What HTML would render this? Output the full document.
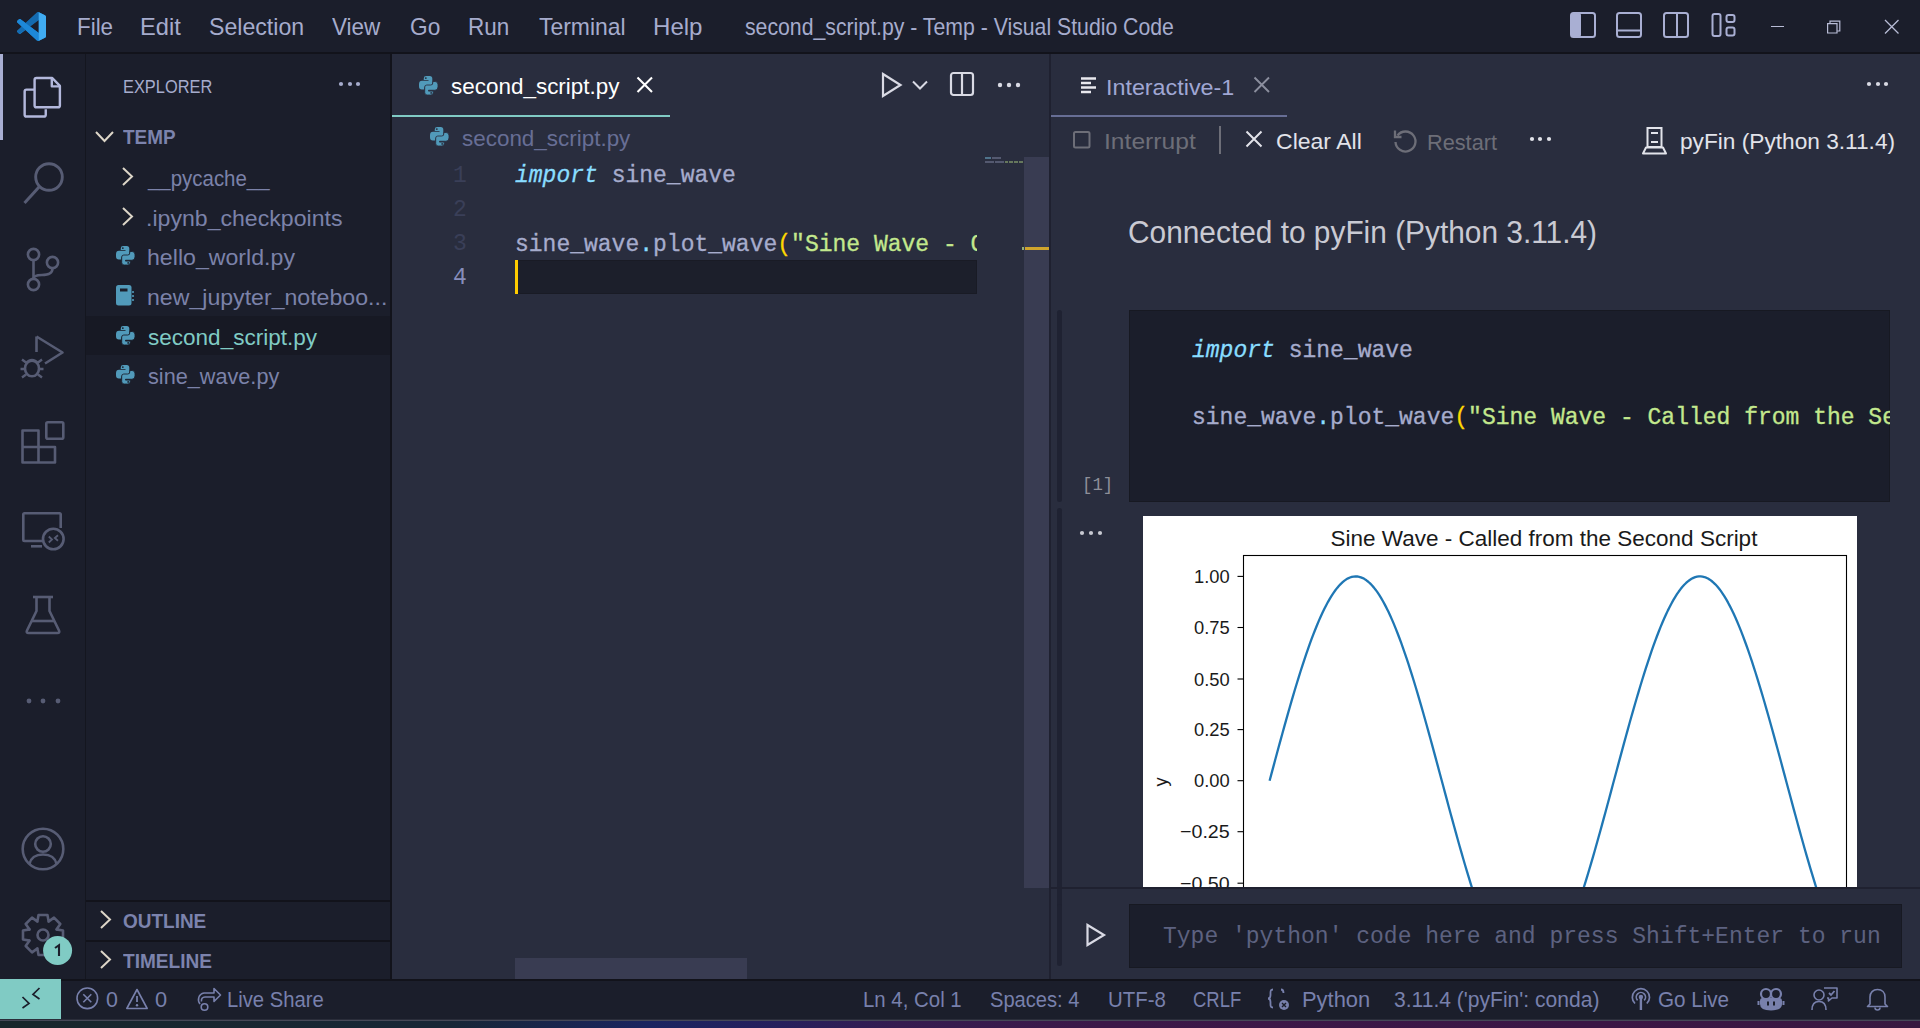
<!DOCTYPE html>
<html><head><meta charset="utf-8"><title>VS Code</title>
<style>
html,body{margin:0;padding:0;width:1920px;height:1028px;overflow:hidden;background:#1b1e2b;}
body{position:relative;font-family:'Liberation Sans', sans-serif;}
</style></head><body>
<div style="position:absolute;left:0px;top:0px;width:1920px;height:52px;background:#1b1e2b;"></div><div style="position:absolute;left:0px;top:52px;width:1920px;height:2px;background:#12131b;"></div><div style="position:absolute;left:0px;top:54px;width:85px;height:925px;background:#1b1e2b;"></div><div style="position:absolute;left:85px;top:54px;width:1px;height:925px;background:#14161f;"></div><div style="position:absolute;left:86px;top:54px;width:304px;height:925px;background:#1b1e2b;"></div><div style="position:absolute;left:390px;top:54px;width:2px;height:925px;background:#12131b;"></div><div style="position:absolute;left:392px;top:54px;width:657px;height:925px;background:#292d3e;"></div><div style="position:absolute;left:1049px;top:54px;width:2px;height:925px;background:#1f2130;"></div><div style="position:absolute;left:1051px;top:54px;width:869px;height:925px;background:#292d3e;"></div><div style="position:absolute;left:0px;top:979px;width:1920px;height:2px;background:#12131b;"></div><div style="position:absolute;left:0px;top:981px;width:1920px;height:38px;background:#1b1e2b;"></div><div style="position:absolute;left:0px;top:1019px;width:1920px;height:1px;background:#2a2d3a;"></div><div style="position:absolute;left:0px;top:1020px;width:1920px;height:1px;background:#454857;"></div><div style="position:absolute;left:0px;top:1021px;width:1920px;height:7px;background:linear-gradient(90deg,#18262b 0px,#172636 450px,#1a2460 650px,#261f5c 780px,#351c50 900px,#3c1848 1100px,#3b1645 1600px,#381840 1920px);"></div><svg style="position:absolute;left:17px;top:12px;" width="29" height="29" viewBox="0 0 100 100" fill="none"><path fill="#1d88d8" fill-rule="evenodd" d="M70.9 99.3C72.5 99.9 74.3 99.9 75.9 99.1L96.5 89.2C98.6 88.2 100 86 100 83.6V16.4C100 14 98.6 11.8 96.5 10.8L75.9 0.9C73.8 -0.1 71.3 0.1 69.5 1.4C69.3 1.6 69 1.8 68.8 2.1L29.4 38L12.2 25C10.6 23.8 8.4 23.9 6.9 25.2L1.4 30.3C-0.5 31.9 -0.5 34.8 1.4 36.4L16.2 50L1.4 63.6C-0.5 65.2 -0.5 68.1 1.4 69.7L6.9 74.8C8.4 76.1 10.6 76.2 12.2 75L29.4 62L68.8 97.9C69.4 98.5 70.1 99 70.9 99.3ZM75 27.3L45.1 50L75 72.7V27.3Z"/>
<path fill="#0b4a80" fill-opacity="0.45" d="M0 66L8 75.5L45.1 50L75 27.3V0.3L69 1.6L29.4 38L16.2 50Z"/>
<path fill="#1d88d8" d="M12.2 25C10.6 23.8 8.4 23.9 6.9 25.2L1.4 30.3C-0.5 31.9 -0.5 34.8 1.4 36.4L16.2 50L29.4 62L68.8 97.9C69.4 98.5 70.1 99 70.9 99.3L75 72.7L45.1 50L29.4 38Z"/>
<path fill="#47b3f7" fill-opacity="0.85" d="M75 0.5L96.5 10.8C98.6 11.8 100 14 100 16.4V83.6C100 86 98.6 88.2 96.5 89.2L75.9 99.1L75 99.5Z"/></svg><div style="position:absolute;left:76.59px;top:16.01px;font-family:'Liberation Sans', sans-serif;font-size:23.4px;line-height:1;white-space:pre;color:#a6accd;font-weight:400;font-style:normal;transform:scaleX(0.9571);transform-origin:0 0;">File</div><div style="position:absolute;left:139.58px;top:16.01px;font-family:'Liberation Sans', sans-serif;font-size:23.4px;line-height:1;white-space:pre;color:#a6accd;font-weight:400;font-style:normal;transform:scaleX(1.0105);transform-origin:0 0;">Edit</div><div style="position:absolute;left:208.51px;top:16.01px;font-family:'Liberation Sans', sans-serif;font-size:23.4px;line-height:1;white-space:pre;color:#a6accd;font-weight:400;font-style:normal;transform:scaleX(0.9883);transform-origin:0 0;">Selection</div><div style="position:absolute;left:332.00px;top:16.01px;font-family:'Liberation Sans', sans-serif;font-size:23.4px;line-height:1;white-space:pre;color:#a6accd;font-weight:400;font-style:normal;transform:scaleX(0.9608);transform-origin:0 0;">View</div><div style="position:absolute;left:409.53px;top:16.01px;font-family:'Liberation Sans', sans-serif;font-size:23.4px;line-height:1;white-space:pre;color:#a6accd;font-weight:400;font-style:normal;transform:scaleX(0.9700);transform-origin:0 0;">Go</div><div style="position:absolute;left:467.68px;top:16.01px;font-family:'Liberation Sans', sans-serif;font-size:23.4px;line-height:1;white-space:pre;color:#a6accd;font-weight:400;font-style:normal;transform:scaleX(0.9600);transform-origin:0 0;">Run</div><div style="position:absolute;left:538.70px;top:16.01px;font-family:'Liberation Sans', sans-serif;font-size:23.4px;line-height:1;white-space:pre;color:#a6accd;font-weight:400;font-style:normal;transform:scaleX(0.9805);transform-origin:0 0;">Terminal</div><div style="position:absolute;left:652.64px;top:16.01px;font-family:'Liberation Sans', sans-serif;font-size:23.4px;line-height:1;white-space:pre;color:#a6accd;font-weight:400;font-style:normal;transform:scaleX(1.0289);transform-origin:0 0;">Help</div><div style="position:absolute;left:744.69px;top:16.01px;font-family:'Liberation Sans', sans-serif;font-size:23.4px;line-height:1;white-space:pre;color:#a6accd;font-weight:400;font-style:normal;transform:scaleX(0.9079);transform-origin:0 0;">second_script.py - Temp - Visual Studio Code</div><svg style="position:absolute;left:1570px;top:12px;" width="26" height="26" viewBox="0 0 26 26" fill="none"><rect x="1" y="1" width="24" height="24" rx="2.5" stroke="#a9afd3" stroke-width="2"/><rect x="1" y="1" width="10" height="24" rx="2" fill="#a9afd3"/></svg><svg style="position:absolute;left:1616px;top:12px;" width="27" height="26" viewBox="0 0 27 26" fill="none"><rect x="1" y="1" width="24" height="24" rx="2.5" stroke="#a9afd3" stroke-width="2"/><line x1="1" y1="18.5" x2="25" y2="18.5" stroke="#a9afd3" stroke-width="2"/></svg><svg style="position:absolute;left:1663px;top:12px;" width="27" height="26" viewBox="0 0 27 26" fill="none"><rect x="1" y="1" width="24" height="24" rx="2.5" stroke="#a9afd3" stroke-width="2"/><line x1="14" y1="1" x2="14" y2="25" stroke="#a9afd3" stroke-width="2"/></svg><svg style="position:absolute;left:1711px;top:12px;" width="27" height="26" viewBox="0 0 27 26" fill="none"><rect x="1.5" y="2" width="8" height="22" rx="2" stroke="#a9afd3" stroke-width="2"/><rect x="15.5" y="3" width="8" height="7" rx="2" stroke="#a9afd3" stroke-width="2"/><rect x="15.5" y="15.5" width="8" height="8" rx="2" stroke="#a9afd3" stroke-width="2"/></svg><div style="position:absolute;left:1771px;top:26px;width:13px;height:1.2px;background:#b8bcd6;"></div><svg style="position:absolute;left:1826px;top:19px;" width="16" height="16" viewBox="0 0 16 16" fill="none"><path d="M1.6 4.6h9.4v9.4H1.6z" stroke="#b8bcd6" stroke-width="1.2" fill="none"/><path d="M4 4.4V2.2h9.8v9.8h-2.6" stroke="#b8bcd6" stroke-width="1.2" fill="none"/></svg><svg style="position:absolute;left:1884px;top:19px;" width="16" height="16" viewBox="0 0 16 16" fill="none"><path d="M1 1L14.5 14.5M14.5 1L1 14.5" stroke="#b8bcd6" stroke-width="1.3"/></svg><div style="position:absolute;left:0px;top:54px;width:3px;height:86px;background:#a9afd3;"></div><svg style="position:absolute;left:20px;top:72px;" width="46" height="50" viewBox="0 0 46 50" fill="none"><g transform="translate(22.5 25.5) scale(0.93) translate(-22.5 -25.5)"><path d="M14 17 H5.3 Q3.3 17 3.3 19 V44 Q3.3 46 5.3 46 H24 Q26 46 26 44 V38" stroke="#b3b8dc" stroke-width="2.6"/>
<path d="M16 4.5 Q14 4.5 14 6.5 V34 Q14 36 16 36 H39.2 Q41.2 36 41.2 34 V13 L33 4.5 Z" stroke="#b3b8dc" stroke-width="2.6" stroke-linejoin="round"/>
<path d="M32.5 4.8 V13.5 H41" stroke="#b3b8dc" stroke-width="2.6" stroke-linejoin="round"/></g></svg><svg style="position:absolute;left:20px;top:158px;" width="48" height="50" viewBox="0 0 48 50" fill="none"><circle cx="29" cy="19" r="13.3" stroke="#575c74" stroke-width="2.9"/><path d="M19.5 28.5 L4.5 45" stroke="#575c74" stroke-width="3"/></svg><svg style="position:absolute;left:20px;top:244px;" width="46" height="52" viewBox="0 0 46 52" fill="none"><circle cx="13.5" cy="10.5" r="5.6" stroke="#575c74" stroke-width="2.6"/>
<circle cx="13.5" cy="40.5" r="5.6" stroke="#575c74" stroke-width="2.6"/>
<circle cx="32.5" cy="18.5" r="5.6" stroke="#575c74" stroke-width="2.6"/>
<path d="M13.5 16.2 V34.8" stroke="#575c74" stroke-width="2.6"/>
<path d="M32.5 24.2 C32.5 30 28 31 22 31 C17 31 13.5 32 13.5 35" stroke="#575c74" stroke-width="2.6"/></svg><svg style="position:absolute;left:0px;top:320px;" width="86" height="240" viewBox="0 0 86 240" fill="none"><g transform="translate(0,-320)">
<path d="M36.5 336.5 V352 M36.5 336.5 L62.5 352.5 L45 363.5" stroke="#575c74" stroke-width="2.6" stroke-linejoin="round"/>
<path d="M25.5 363.5 Q32 356.5 38.5 363.5" stroke="#575c74" stroke-width="2.4"/>
<ellipse cx="32" cy="368.5" rx="7" ry="7.8" stroke="#575c74" stroke-width="2.6"/>
<path d="M22 359.5 L26 362.5 M42 359.5 L38 362.5 M20.5 369 H25 M39 369 H43.5 M22 377.5 L26 374.5 M42 377.5 L38 374.5" stroke="#575c74" stroke-width="2.3"/>
<path d="M22.5 430.5 H38.5 V447 H55 V462.5 H22.5 Z M22.5 447 H38.5 V462.5" stroke="#575c74" stroke-width="2.6" stroke-linejoin="round"/>
<rect x="46.3" y="422.3" width="17" height="16.5" rx="1.5" stroke="#575c74" stroke-width="2.6"/>
<path d="M43 541 H24.5 Q23.3 541 23.3 539.8 V514.5 Q23.3 513.3 24.5 513.3 H59.5 Q60.7 513.3 60.7 514.5 V528" stroke="#575c74" stroke-width="2.6"/>
<path d="M31 546.3 H42" stroke="#575c74" stroke-width="2.6"/>
<circle cx="53.3" cy="539" r="10.3" stroke="#575c74" stroke-width="2.6"/>
<path d="M48.8 536.5 L52 539.5 L48.8 542.5 M58 535.3 L54.8 538 L58 540.8" stroke="#575c74" stroke-width="1.8"/>
</g></svg><svg style="position:absolute;left:20px;top:592px;" width="46" height="46" viewBox="0 0 46 46" fill="none"><path d="M16.5 6 V19 L7 38.5 Q6 41 8.5 41 H37.5 Q40 41 39 38.5 L29.5 19 V6" stroke="#575c74" stroke-width="2.6" stroke-linejoin="round"/>
<path d="M13 5 H33" stroke="#575c74" stroke-width="2.6"/><path d="M11.5 29 H34.5" stroke="#575c74" stroke-width="2.6"/></svg><svg style="position:absolute;left:25.5px;top:698px;" width="6" height="6" viewBox="0 0 6 6" fill="none"><circle cx="3" cy="3" r="2.4" fill="#575c74"/></svg><svg style="position:absolute;left:40px;top:698px;" width="6" height="6" viewBox="0 0 6 6" fill="none"><circle cx="3" cy="3" r="2.4" fill="#575c74"/></svg><svg style="position:absolute;left:54.5px;top:698px;" width="6" height="6" viewBox="0 0 6 6" fill="none"><circle cx="3" cy="3" r="2.4" fill="#575c74"/></svg><svg style="position:absolute;left:18px;top:825px;" width="50" height="50" viewBox="0 0 50 50" fill="none"><circle cx="25" cy="24" r="20.3" stroke="#575c74" stroke-width="2.6"/>
<circle cx="25" cy="19" r="7.8" stroke="#575c74" stroke-width="2.6"/>
<path d="M11.5 39 C13 32 18 29.5 25 29.5 C32 29.5 37 32 38.5 39" stroke="#575c74" stroke-width="2.6"/></svg><svg style="position:absolute;left:18px;top:910px;" width="50" height="50" viewBox="0 0 50 50" fill="none"><path d="M38.36 19.35 L45.01 20.53 L45.01 29.47 L38.36 30.65 L38.44 30.45 L42.31 35.98 L35.98 42.31 L30.45 38.44 L30.65 38.36 L29.47 45.01 L20.53 45.01 L19.35 38.36 L19.55 38.44 L14.02 42.31 L7.69 35.98 L11.56 30.45 L11.64 30.65 L4.99 29.47 L4.99 20.53 L11.64 19.35 L11.56 19.55 L7.69 14.02 L14.02 7.69 L19.55 11.56 L19.35 11.64 L20.53 4.99 L29.47 4.99 L30.65 11.64 L30.45 11.56 L35.98 7.69 L42.31 14.02 L38.44 19.55Z" stroke="#575c74" stroke-width="2.6" stroke-linejoin="round"/><circle cx="25" cy="25" r="5.5" stroke="#575c74" stroke-width="2.6"/></svg><svg style="position:absolute;left:43px;top:936px;" width="30" height="30" viewBox="0 0 30 30" fill="none"><circle cx="14.6" cy="14.5" r="14.5" fill="#80cbc4"/></svg><svg style="position:absolute;left:50px;top:940px;" width="16" height="20" viewBox="0 0 16 20" fill="none"><path d="M5 8 L9 5.2 V16" stroke="#1b1e2b" stroke-width="2.1" stroke-linejoin="miter"/></svg><div style="position:absolute;left:123.14px;top:76.85px;font-family:'Liberation Sans', sans-serif;font-size:19px;line-height:1;white-space:pre;color:#a6accd;font-weight:400;font-style:normal;transform:scaleX(0.8627);transform-origin:0 0;">EXPLORER</div><svg style="position:absolute;left:338px;top:81px;" width="6" height="6" viewBox="0 0 6 6" fill="none"><circle cx="3" cy="3" r="2.1" fill="#a6accd"/></svg><svg style="position:absolute;left:346.5px;top:81px;" width="6" height="6" viewBox="0 0 6 6" fill="none"><circle cx="3" cy="3" r="2.1" fill="#a6accd"/></svg><svg style="position:absolute;left:355px;top:81px;" width="6" height="6" viewBox="0 0 6 6" fill="none"><circle cx="3" cy="3" r="2.1" fill="#a6accd"/></svg><svg style="position:absolute;left:94px;top:130px;" width="21" height="13" viewBox="0 0 21 13" fill="none"><path d="M2 2 L10.5 11 L19 2" stroke="#ddd6c8" stroke-width="2"/></svg><div style="position:absolute;left:123.00px;top:127.57px;font-family:'Liberation Sans', sans-serif;font-size:19.8px;line-height:1;white-space:pre;color:#7c83ad;font-weight:700;font-style:normal;transform:scaleX(0.9564);transform-origin:0 0;">TEMP</div><svg style="position:absolute;left:121px;top:166px;" width="13" height="21" viewBox="0 0 13 21" fill="none"><path d="M2 2 L11 10.5 L2 19" stroke="#ddd6c8" stroke-width="2" stroke-linejoin="miter"/></svg><div style="position:absolute;left:148.31px;top:167.68px;font-family:'Liberation Sans', sans-serif;font-size:22.5px;line-height:1;white-space:pre;color:#7b82a9;font-weight:400;font-style:normal;transform:scaleX(0.9081);transform-origin:0 0;">__pycache__</div><svg style="position:absolute;left:121px;top:206px;" width="13" height="21" viewBox="0 0 13 21" fill="none"><path d="M2 2 L11 10.5 L2 19" stroke="#ddd6c8" stroke-width="2" stroke-linejoin="miter"/></svg><div style="position:absolute;left:145.75px;top:207.68px;font-family:'Liberation Sans', sans-serif;font-size:22.5px;line-height:1;white-space:pre;color:#7b82a9;font-weight:400;font-style:normal;transform:scaleX(1.0265);transform-origin:0 0;">.ipynb_checkpoints</div><svg style="position:absolute;left:115.5px;top:246px;" width="19" height="19" viewBox="0 0 20 20" fill="none"><path fill="#519aba" d="M7.5 0 H11.3 Q14 0 14 2.7 V8.3 Q14 10.5 11.8 10.5 H7.7 Q5.5 10.5 5.5 12.7 V14.2 H3 Q0 14.2 0 10.8 V8.6 Q0 5 3.2 5 H10 V4.1 H5 V2.5 Q5 0 7.5 0 Z"/>
<path fill="#519aba" stroke="#1b1e2b" stroke-width="0.9" d="M7.5 0 H11.3 Q14 0 14 2.7 V8.3 Q14 10.5 11.8 10.5 H7.7 Q5.5 10.5 5.5 12.7 V14.2 H3 Q0 14.2 0 10.8 V8.6 Q0 5 3.2 5 H10 V4.1 H5 V2.5 Q5 0 7.5 0 Z" transform="rotate(180 10 10)"/>
<circle cx="7.2" cy="2.2" r="0.95" fill="#1b1e2b"/><circle cx="12.8" cy="17.8" r="0.95" fill="#1b1e2b"/></svg><div style="position:absolute;left:147.17px;top:247.18px;font-family:'Liberation Sans', sans-serif;font-size:22.5px;line-height:1;white-space:pre;color:#7b82a9;font-weight:400;font-style:normal;transform:scaleX(1.0287);transform-origin:0 0;">hello_world.py</div><svg style="position:absolute;left:116px;top:285px;" width="19" height="21" viewBox="0 0 19 21" fill="none"><rect x="0" y="0" width="15.5" height="20.5" rx="2.5" fill="#519aba"/>
<rect x="4" y="3.5" width="7.5" height="3" fill="#1b1e2b"/>
<circle cx="17" cy="7" r="1.1" fill="#519aba"/><circle cx="17" cy="11" r="1.1" fill="#519aba"/><circle cx="17" cy="15" r="1.1" fill="#519aba"/></svg><div style="position:absolute;left:147.17px;top:287.18px;font-family:'Liberation Sans', sans-serif;font-size:22.5px;line-height:1;white-space:pre;color:#7b82a9;font-weight:400;font-style:normal;transform:scaleX(1.0273);transform-origin:0 0;">new_jupyter_noteboo...</div><div style="position:absolute;left:86px;top:316px;width:304px;height:39px;background:#171924;"></div><svg style="position:absolute;left:115.5px;top:325.5px;" width="19" height="19" viewBox="0 0 20 20" fill="none"><path fill="#519aba" d="M7.5 0 H11.3 Q14 0 14 2.7 V8.3 Q14 10.5 11.8 10.5 H7.7 Q5.5 10.5 5.5 12.7 V14.2 H3 Q0 14.2 0 10.8 V8.6 Q0 5 3.2 5 H10 V4.1 H5 V2.5 Q5 0 7.5 0 Z"/>
<path fill="#519aba" stroke="#171924" stroke-width="0.9" d="M7.5 0 H11.3 Q14 0 14 2.7 V8.3 Q14 10.5 11.8 10.5 H7.7 Q5.5 10.5 5.5 12.7 V14.2 H3 Q0 14.2 0 10.8 V8.6 Q0 5 3.2 5 H10 V4.1 H5 V2.5 Q5 0 7.5 0 Z" transform="rotate(180 10 10)"/>
<circle cx="7.2" cy="2.2" r="0.95" fill="#171924"/><circle cx="12.8" cy="17.8" r="0.95" fill="#171924"/></svg><div style="position:absolute;left:147.60px;top:326.68px;font-family:'Liberation Sans', sans-serif;font-size:22.5px;line-height:1;white-space:pre;color:#80cbc4;font-weight:400;font-style:normal;transform:scaleX(1.0012);transform-origin:0 0;">second_script.py</div><svg style="position:absolute;left:115.5px;top:365px;" width="19" height="19" viewBox="0 0 20 20" fill="none"><path fill="#519aba" d="M7.5 0 H11.3 Q14 0 14 2.7 V8.3 Q14 10.5 11.8 10.5 H7.7 Q5.5 10.5 5.5 12.7 V14.2 H3 Q0 14.2 0 10.8 V8.6 Q0 5 3.2 5 H10 V4.1 H5 V2.5 Q5 0 7.5 0 Z"/>
<path fill="#519aba" stroke="#1b1e2b" stroke-width="0.9" d="M7.5 0 H11.3 Q14 0 14 2.7 V8.3 Q14 10.5 11.8 10.5 H7.7 Q5.5 10.5 5.5 12.7 V14.2 H3 Q0 14.2 0 10.8 V8.6 Q0 5 3.2 5 H10 V4.1 H5 V2.5 Q5 0 7.5 0 Z" transform="rotate(180 10 10)"/>
<circle cx="7.2" cy="2.2" r="0.95" fill="#1b1e2b"/><circle cx="12.8" cy="17.8" r="0.95" fill="#1b1e2b"/></svg><div style="position:absolute;left:147.60px;top:366.18px;font-family:'Liberation Sans', sans-serif;font-size:22.5px;line-height:1;white-space:pre;color:#7b82a9;font-weight:400;font-style:normal;transform:scaleX(0.9628);transform-origin:0 0;">sine_wave.py</div><div style="position:absolute;left:86px;top:900px;width:304px;height:2px;background:#12131b;"></div><svg style="position:absolute;left:99px;top:909px;" width="13" height="21" viewBox="0 0 13 21" fill="none"><path d="M2 2 L11 10.5 L2 19" stroke="#ddd6c8" stroke-width="2" stroke-linejoin="miter"/></svg><div style="position:absolute;left:123.00px;top:911.57px;font-family:'Liberation Sans', sans-serif;font-size:19.8px;line-height:1;white-space:pre;color:#7c83ad;font-weight:700;font-style:normal;transform:scaleX(0.9593);transform-origin:0 0;">OUTLINE</div><div style="position:absolute;left:86px;top:940px;width:304px;height:2px;background:#12131b;"></div><svg style="position:absolute;left:99px;top:949px;" width="13" height="21" viewBox="0 0 13 21" fill="none"><path d="M2 2 L11 10.5 L2 19" stroke="#ddd6c8" stroke-width="2" stroke-linejoin="miter"/></svg><div style="position:absolute;left:123.00px;top:951.57px;font-family:'Liberation Sans', sans-serif;font-size:19.8px;line-height:1;white-space:pre;color:#7c83ad;font-weight:700;font-style:normal;transform:scaleX(0.9641);transform-origin:0 0;">TIMELINE</div><div style="position:absolute;left:392px;top:115px;width:278px;height:2px;background:#80cbc4;"></div><svg style="position:absolute;left:418.5px;top:76px;" width="19" height="19" viewBox="0 0 20 20" fill="none"><path fill="#519aba" d="M7.5 0 H11.3 Q14 0 14 2.7 V8.3 Q14 10.5 11.8 10.5 H7.7 Q5.5 10.5 5.5 12.7 V14.2 H3 Q0 14.2 0 10.8 V8.6 Q0 5 3.2 5 H10 V4.1 H5 V2.5 Q5 0 7.5 0 Z"/>
<path fill="#519aba" stroke="#292d3e" stroke-width="0.9" d="M7.5 0 H11.3 Q14 0 14 2.7 V8.3 Q14 10.5 11.8 10.5 H7.7 Q5.5 10.5 5.5 12.7 V14.2 H3 Q0 14.2 0 10.8 V8.6 Q0 5 3.2 5 H10 V4.1 H5 V2.5 Q5 0 7.5 0 Z" transform="rotate(180 10 10)"/>
<circle cx="7.2" cy="2.2" r="0.95" fill="#292d3e"/><circle cx="12.8" cy="17.8" r="0.95" fill="#292d3e"/></svg><div style="position:absolute;left:450.60px;top:75.88px;font-family:'Liberation Sans', sans-serif;font-size:22.5px;line-height:1;white-space:pre;color:#ffffff;font-weight:400;font-style:normal;transform:scaleX(0.9982);transform-origin:0 0;">second_script.py</div><svg style="position:absolute;left:635px;top:75px;" width="20" height="20" viewBox="0 0 20 20" fill="none"><path d="M2.5 2.5 L17 17 M17 2.5 L2.5 17" stroke="#ffffff" stroke-width="2.1"/></svg><svg style="position:absolute;left:880px;top:71px;" width="24" height="28" viewBox="0 0 24 28" fill="none"><path d="M3 3 L20.5 14 L3 25 Z" stroke="#d9dae4" stroke-width="2.2" stroke-linejoin="miter"/></svg><svg style="position:absolute;left:911px;top:79px;" width="18" height="12" viewBox="0 0 18 12" fill="none"><path d="M2 2.5 L9 9.5 L16 2.5" stroke="#d9dae4" stroke-width="2"/></svg><svg style="position:absolute;left:948px;top:70px;" width="28" height="28" viewBox="0 0 28 28" fill="none"><rect x="3" y="3" width="22" height="22" rx="2.5" stroke="#d9dae4" stroke-width="2.2"/><path d="M14 3 V25" stroke="#d9dae4" stroke-width="2.2"/></svg><svg style="position:absolute;left:996.5px;top:81.5px;" width="6" height="6" viewBox="0 0 6 6" fill="none"><circle cx="3" cy="3" r="2.2" fill="#d9dae4"/></svg><svg style="position:absolute;left:1005.5px;top:81.5px;" width="6" height="6" viewBox="0 0 6 6" fill="none"><circle cx="3" cy="3" r="2.2" fill="#d9dae4"/></svg><svg style="position:absolute;left:1014.5px;top:81.5px;" width="6" height="6" viewBox="0 0 6 6" fill="none"><circle cx="3" cy="3" r="2.2" fill="#d9dae4"/></svg><svg style="position:absolute;left:429.5px;top:126.5px;" width="19" height="19" viewBox="0 0 20 20" fill="none"><path fill="#519aba" d="M7.5 0 H11.3 Q14 0 14 2.7 V8.3 Q14 10.5 11.8 10.5 H7.7 Q5.5 10.5 5.5 12.7 V14.2 H3 Q0 14.2 0 10.8 V8.6 Q0 5 3.2 5 H10 V4.1 H5 V2.5 Q5 0 7.5 0 Z"/>
<path fill="#519aba" stroke="#292d3e" stroke-width="0.9" d="M7.5 0 H11.3 Q14 0 14 2.7 V8.3 Q14 10.5 11.8 10.5 H7.7 Q5.5 10.5 5.5 12.7 V14.2 H3 Q0 14.2 0 10.8 V8.6 Q0 5 3.2 5 H10 V4.1 H5 V2.5 Q5 0 7.5 0 Z" transform="rotate(180 10 10)"/>
<circle cx="7.2" cy="2.2" r="0.95" fill="#292d3e"/><circle cx="12.8" cy="17.8" r="0.95" fill="#292d3e"/></svg><div style="position:absolute;left:461.50px;top:127.68px;font-family:'Liberation Sans', sans-serif;font-size:22.5px;line-height:1;white-space:pre;color:#676e95;font-weight:400;font-style:normal;transform:scaleX(0.9970);transform-origin:0 0;">second_script.py</div><div style="position:absolute;left:453.00px;top:164.52px;font-family:'Liberation Mono', monospace;font-size:23px;line-height:1;white-space:pre;color:#3a3f58;font-weight:400;font-style:normal;">1</div><div style="position:absolute;left:453.00px;top:198.72px;font-family:'Liberation Mono', monospace;font-size:23px;line-height:1;white-space:pre;color:#3a3f58;font-weight:400;font-style:normal;">2</div><div style="position:absolute;left:453.00px;top:232.92px;font-family:'Liberation Mono', monospace;font-size:23px;line-height:1;white-space:pre;color:#3a3f58;font-weight:400;font-style:normal;">3</div><div style="position:absolute;left:453.00px;top:267.12px;font-family:'Liberation Mono', monospace;font-size:23px;line-height:1;white-space:pre;color:#878dbb;font-weight:400;font-style:normal;">4</div><div style="position:absolute;left:515px;top:260.1px;width:462px;height:34.2px;background:#1c1f2b;box-shadow:inset 0 0 0 1px #191b25"></div><div style="position:absolute;left:515px;top:260.1px;width:3px;height:34.2px;background:#ffcc00;"></div><div style="position:absolute;left:515px;top:159.3px;width:462px;height:102.60000000000001px;overflow:hidden;font-family:'Liberation Mono', monospace;font-size:23px;line-height:34.2px;-webkit-text-stroke:0.3px currentColor;white-space:pre;color:#a6accd"><div><span style="color:#89ddff;font-style:italic">import</span> sine_wave</div><div> </div><div>sine_wave<span style="color:#89ddff">.</span>plot_wave<span style="color:#ffd700">(</span><span style="color:#c3e88d">"Sine Wave - Called from the Second Script"</span><span style="color:#ffd700">)</span></div></div><div style="position:absolute;left:985px;top:157px;width:6px;height:1.6px;background:#89ddff;opacity:0.4"></div><div style="position:absolute;left:992px;top:157px;width:9px;height:1.6px;background:#a6accd;opacity:0.35"></div><div style="position:absolute;left:985px;top:161px;width:9px;height:1.6px;background:#a6accd;opacity:0.35"></div><div style="position:absolute;left:995px;top:161px;width:9px;height:1.6px;background:#a6accd;opacity:0.35"></div><div style="position:absolute;left:1005px;top:161px;width:3px;height:1.6px;background:#c3e88d;opacity:0.4"></div><div style="position:absolute;left:1009px;top:161px;width:4px;height:1.6px;background:#c3e88d;opacity:0.4"></div><div style="position:absolute;left:1014px;top:161px;width:4px;height:1.6px;background:#c3e88d;opacity:0.4"></div><div style="position:absolute;left:1019px;top:161px;width:4px;height:1.6px;background:#c3e88d;opacity:0.4"></div><div style="position:absolute;left:1024px;top:157px;width:25px;height:731px;background:#393c52;"></div><div style="position:absolute;left:1025px;top:247px;width:24px;height:3px;background:#d0a52c;"></div><div style="position:absolute;left:1022px;top:247px;width:2px;height:3px;background:#c3e88d;opacity:0.7"></div><div style="position:absolute;left:515px;top:958px;width:232px;height:21px;background:#393c52;"></div><div style="position:absolute;left:1051px;top:115px;width:236px;height:2px;background:#676e95;"></div><svg style="position:absolute;left:1080px;top:76px;" width="18" height="19" viewBox="0 0 18 19" fill="none"><path d="M1 2.5 H16 M1 7 H11 M1 11.5 H16 M1 16 H11" stroke="#e8e8ee" stroke-width="2.6"/></svg><div style="position:absolute;left:1105.96px;top:75.62px;font-family:'Liberation Sans', sans-serif;font-size:22.8px;line-height:1;white-space:pre;color:#a0a7d4;font-weight:400;font-style:normal;transform:scaleX(1.0220);transform-origin:0 0;">Interactive-1</div><svg style="position:absolute;left:1252px;top:75px;" width="20" height="20" viewBox="0 0 20 20" fill="none"><path d="M2.5 2.5 L17 17 M17 2.5 L2.5 17" stroke="#8b8e9e" stroke-width="1.9"/></svg><svg style="position:absolute;left:1866px;top:81px;" width="6" height="6" viewBox="0 0 6 6" fill="none"><circle cx="3" cy="3" r="2.1" fill="#d9dae4"/></svg><svg style="position:absolute;left:1874.5px;top:81px;" width="6" height="6" viewBox="0 0 6 6" fill="none"><circle cx="3" cy="3" r="2.1" fill="#d9dae4"/></svg><svg style="position:absolute;left:1883px;top:81px;" width="6" height="6" viewBox="0 0 6 6" fill="none"><circle cx="3" cy="3" r="2.1" fill="#d9dae4"/></svg><svg style="position:absolute;left:1072px;top:130px;" width="20" height="20" viewBox="0 0 20 20" fill="none"><rect x="2" y="2" width="15.5" height="15.5" rx="1.5" stroke="#6d6e78" stroke-width="2"/></svg><div style="position:absolute;left:1103.81px;top:130.57px;font-family:'Liberation Sans', sans-serif;font-size:22.5px;line-height:1;white-space:pre;color:#6d6e78;font-weight:400;font-style:normal;transform:scaleX(1.0951);transform-origin:0 0;">Interrupt</div><div style="position:absolute;left:1219px;top:126px;width:2px;height:28px;background:#6d6e78;"></div><svg style="position:absolute;left:1244px;top:129px;" width="20" height="20" viewBox="0 0 20 20" fill="none"><path d="M2.5 2.5 L17.5 17.5 M17.5 2.5 L2.5 17.5" stroke="#e2e3ea" stroke-width="2"/></svg><div style="position:absolute;left:1276.47px;top:130.66px;font-family:'Liberation Sans', sans-serif;font-size:22.4px;line-height:1;white-space:pre;color:#e2e3ea;font-weight:400;font-style:normal;transform:scaleX(1.0284);transform-origin:0 0;">Clear All</div><svg style="position:absolute;left:1391px;top:127px;" width="27" height="27" viewBox="0 0 27 27" fill="none"><path d="M6.5 8.5 A10 10 0 1 1 4.5 15" stroke="#6d6e78" stroke-width="2.3"/><path d="M4 3.5 V10 H10.5" stroke="#6d6e78" stroke-width="2.3"/></svg><div style="position:absolute;left:1427.41px;top:131.50px;font-family:'Liberation Sans', sans-serif;font-size:22px;line-height:1;white-space:pre;color:#6d6e78;font-weight:400;font-style:normal;transform:scaleX(0.9871);transform-origin:0 0;">Restart</div><svg style="position:absolute;left:1528.5px;top:136px;" width="6" height="6" viewBox="0 0 6 6" fill="none"><circle cx="3" cy="3" r="2.1" fill="#e2e3ea"/></svg><svg style="position:absolute;left:1537px;top:136px;" width="6" height="6" viewBox="0 0 6 6" fill="none"><circle cx="3" cy="3" r="2.1" fill="#e2e3ea"/></svg><svg style="position:absolute;left:1545.5px;top:136px;" width="6" height="6" viewBox="0 0 6 6" fill="none"><circle cx="3" cy="3" r="2.1" fill="#e2e3ea"/></svg><svg style="position:absolute;left:1640px;top:125px;" width="30" height="31" viewBox="0 0 30 31" fill="none"><path d="M7.5 3 H21.5 V22 H7.5 Z" stroke="#e2e3ea" stroke-width="2"/>
<path d="M11 8 H18 M11 17 H18" stroke="#e2e3ea" stroke-width="2"/>
<path d="M3 28.5 L6 22.5 H23 L26 28.5 Z" stroke="#e2e3ea" stroke-width="2" stroke-linejoin="round"/></svg><div style="position:absolute;left:1679.99px;top:131.07px;font-family:'Liberation Sans', sans-serif;font-size:22.5px;line-height:1;white-space:pre;color:#e2e3ea;font-weight:400;font-style:normal;transform:scaleX(1.0075);transform-origin:0 0;">pyFin (Python 3.11.4)</div><div style="position:absolute;left:1127.54px;top:216.65px;font-family:'Liberation Sans', sans-serif;font-size:31px;line-height:1;white-space:pre;color:#c9cad3;font-weight:400;font-style:normal;transform:scaleX(0.9629);transform-origin:0 0;">Connected to pyFin (Python 3.11.4)</div><div style="position:absolute;left:1057px;top:310px;width:5px;height:192px;background:#1f2232;border-radius:2.5px"></div><div style="position:absolute;left:1129px;top:310px;width:761px;height:192px;background:#1b1e2b;box-shadow:inset 0 0 0 1px #171922"></div><div style="position:absolute;left:1192px;top:334.5px;width:698px;height:100px;overflow:hidden;font-family:'Liberation Mono', monospace;font-size:23px;line-height:33.95px;-webkit-text-stroke:0.3px currentColor;white-space:pre;color:#a6accd"><div><span style="color:#89ddff;font-style:italic">import</span> sine_wave</div><div> </div><div>sine_wave<span style="color:#89ddff">.</span>plot_wave<span style="color:#ffd700">(</span><span style="color:#c3e88d">"Sine Wave - Called from the Second Script"</span><span style="color:#ffd700">)</span></div></div><div style="position:absolute;left:1081.74px;top:476.70px;font-family:'Liberation Mono', monospace;font-size:17.5px;line-height:1;white-space:pre;color:#8e8f99;font-weight:400;font-style:normal;transform:scaleX(0.9880);transform-origin:0 0;">[1]</div><div style="position:absolute;left:1057px;top:508px;width:5px;height:400px;background:#1f2232;border-radius:2.5px"></div><svg style="position:absolute;left:1079px;top:530px;" width="6" height="6" viewBox="0 0 6 6" fill="none"><circle cx="3" cy="3" r="2.1" fill="#c8c9d2"/></svg><svg style="position:absolute;left:1088px;top:530px;" width="6" height="6" viewBox="0 0 6 6" fill="none"><circle cx="3" cy="3" r="2.1" fill="#c8c9d2"/></svg><svg style="position:absolute;left:1097px;top:530px;" width="6" height="6" viewBox="0 0 6 6" fill="none"><circle cx="3" cy="3" r="2.1" fill="#c8c9d2"/></svg><svg style="position:absolute;left:1143px;top:516px" width="714" height="371" viewBox="0 0 714 371">
<rect x="0" y="0" width="714" height="371" fill="#ffffff"/>
<text x="187.6" y="29.5" textLength="426.8" lengthAdjust="spacingAndGlyphs" font-family="Liberation Sans" font-size="22.5" fill="#1a1a1a">Sine Wave - Called from the Second Script</text>
<rect x="100.5" y="39.5" width="603" height="400" fill="none" stroke="#000" stroke-width="1.1"/>
<line x1="94.5" y1="60.40" x2="100.5" y2="60.40" stroke="#000" stroke-width="1.1"/><text x="51.00" y="67.00" textLength="35.7" lengthAdjust="spacingAndGlyphs" font-family="Liberation Sans" font-size="18.3" fill="#1a1a1a">1.00</text><line x1="94.5" y1="111.50" x2="100.5" y2="111.50" stroke="#000" stroke-width="1.1"/><text x="51.00" y="118.10" textLength="35.7" lengthAdjust="spacingAndGlyphs" font-family="Liberation Sans" font-size="18.3" fill="#1a1a1a">0.75</text><line x1="94.5" y1="163.00" x2="100.5" y2="163.00" stroke="#000" stroke-width="1.1"/><text x="51.00" y="169.60" textLength="35.7" lengthAdjust="spacingAndGlyphs" font-family="Liberation Sans" font-size="18.3" fill="#1a1a1a">0.50</text><line x1="94.5" y1="213.60" x2="100.5" y2="213.60" stroke="#000" stroke-width="1.1"/><text x="51.00" y="220.20" textLength="35.7" lengthAdjust="spacingAndGlyphs" font-family="Liberation Sans" font-size="18.3" fill="#1a1a1a">0.25</text><line x1="94.5" y1="264.70" x2="100.5" y2="264.70" stroke="#000" stroke-width="1.1"/><text x="51.00" y="271.30" textLength="35.7" lengthAdjust="spacingAndGlyphs" font-family="Liberation Sans" font-size="18.3" fill="#1a1a1a">0.00</text><line x1="94.5" y1="315.70" x2="100.5" y2="315.70" stroke="#000" stroke-width="1.1"/><text x="37.00" y="322.30" textLength="49.7" lengthAdjust="spacingAndGlyphs" font-family="Liberation Sans" font-size="18.3" fill="#1a1a1a">−0.25</text><line x1="94.5" y1="367.20" x2="100.5" y2="367.20" stroke="#000" stroke-width="1.1"/><text x="37.00" y="373.80" textLength="49.7" lengthAdjust="spacingAndGlyphs" font-family="Liberation Sans" font-size="18.3" fill="#1a1a1a">−0.50</text>
<text transform="translate(24,266) rotate(-90)" text-anchor="middle" font-family="Liberation Sans" font-size="18.3" fill="#1a1a1a">y</text>
<polyline points="126.60,264.70 128.43,257.89 130.25,251.09 132.08,244.30 133.91,237.54 135.73,230.81 137.56,224.11 139.39,217.46 141.21,210.86 143.04,204.33 144.87,197.85 146.69,191.46 148.52,185.14 150.35,178.91 152.17,172.78 154.00,166.75 155.83,160.83 157.65,155.03 159.48,149.34 161.31,143.79 163.13,138.37 164.96,133.09 166.79,127.95 168.61,122.97 170.44,118.14 172.27,113.48 174.09,108.99 175.92,104.67 177.75,100.52 179.57,96.56 181.40,92.79 183.23,89.20 185.05,85.82 186.88,82.63 188.71,79.64 190.53,76.86 192.36,74.28 194.19,71.92 196.01,69.78 197.84,67.85 199.67,66.13 201.49,64.64 203.32,63.37 205.15,62.33 206.97,61.51 208.80,60.91 210.63,60.54 212.45,60.40 214.28,60.49 216.11,60.80 217.93,61.34 219.76,62.10 221.59,63.09 223.41,64.31 225.24,65.74 227.07,67.40 228.89,69.28 230.72,71.37 232.55,73.68 234.37,76.20 236.20,78.93 238.03,81.87 239.85,85.01 241.68,88.35 243.51,91.88 245.33,95.61 247.16,99.52 248.99,103.62 250.81,107.90 252.64,112.35 254.47,116.97 256.29,121.76 258.12,126.70 259.95,131.80 261.77,137.05 263.60,142.43 265.43,147.95 267.25,153.61 269.08,159.38 270.91,165.28 272.73,171.28 274.56,177.39 276.39,183.59 278.21,189.88 280.04,196.26 281.87,202.72 283.69,209.24 285.52,215.82 287.35,222.46 289.17,229.14 291.00,235.87 292.83,242.63 294.65,249.41 296.48,256.21 298.31,263.01 300.13,269.82 301.96,276.63 303.79,283.42 305.61,290.19 307.44,296.93 309.27,303.63 311.09,310.30 312.92,316.91 314.75,323.46 316.57,329.95 318.40,336.37 320.23,342.70 322.05,348.95 323.88,355.11 325.71,361.16 327.53,367.11 329.36,372.95 331.19,378.66 333.01,384.25 334.84,389.70 336.67,395.02 338.49,400.19 340.32,405.21 342.15,410.08 343.97,414.78 345.80,419.31 347.63,423.68 349.45,427.87 351.28,431.87 353.11,435.69 354.93,439.33 356.76,442.76 358.59,446.00 360.41,449.04 362.24,451.87 364.07,454.50 365.89,456.91 367.72,459.11 369.55,461.10 371.37,462.86 373.20,464.41 375.03,465.73 376.85,466.83 378.68,467.71 380.51,468.36 382.33,468.79 384.16,468.98 385.99,468.96 387.81,468.70 389.64,468.22 391.47,467.51 393.29,466.57 395.12,465.42 396.95,464.03 398.77,462.43 400.60,460.61 402.43,458.57 404.25,456.31 406.08,453.84 407.91,451.17 409.73,448.28 411.56,445.19 413.39,441.90 415.21,438.41 417.04,434.73 418.87,430.86 420.69,426.81 422.52,422.58 424.35,418.17 426.17,413.59 428.00,408.84 429.83,403.94 431.65,398.88 433.48,393.67 435.31,388.32 437.13,382.83 438.96,377.21 440.79,371.46 442.61,365.59 444.44,359.62 446.27,353.54 448.09,347.36 449.92,341.08 451.75,334.73 453.57,328.29 455.40,321.78 457.23,315.22 459.05,308.59 460.88,301.92 462.71,295.20 464.53,288.45 466.36,281.68 468.19,274.88 470.01,268.07 471.84,261.26 473.67,254.46 475.49,247.66 477.32,240.89 479.15,234.14 480.97,227.42 482.80,220.75 484.63,214.13 486.45,207.56 488.28,201.05 490.11,194.62 491.93,188.26 493.76,181.99 495.59,175.81 497.41,169.73 499.24,163.75 501.07,157.89 502.89,152.14 504.72,146.52 506.55,141.04 508.37,135.69 510.20,130.48 512.03,125.42 513.85,120.52 515.68,115.77 517.51,111.19 519.33,106.79 521.16,102.55 522.99,98.50 524.81,94.63 526.64,90.96 528.47,87.47 530.29,84.18 532.12,81.09 533.95,78.21 535.77,75.53 537.60,73.07 539.43,70.81 541.25,68.77 543.08,66.95 544.91,65.35 546.73,63.97 548.56,62.82 550.39,61.89 552.21,61.18 554.04,60.70 555.87,60.44 557.69,60.42 559.52,60.62 561.35,61.04 563.17,61.70 565.00,62.57 566.83,63.68 568.65,65.00 570.48,66.55 572.31,68.32 574.13,70.31 575.96,72.51 577.79,74.92 579.61,77.55 581.44,80.39 583.27,83.43 585.09,86.67 586.92,90.11 588.75,93.74 590.57,97.56 592.40,101.57 594.23,105.76 596.05,110.12 597.88,114.66 599.71,119.37 601.53,124.23 603.36,129.26 605.19,134.43 607.01,139.75 608.84,145.20 610.67,150.79 612.49,156.51 614.32,162.34 616.15,168.29 617.97,174.35 619.80,180.50 621.63,186.75 623.45,193.09 625.28,199.51 627.11,206.00 628.93,212.55 630.76,219.16 632.59,225.83 634.41,232.53 636.24,239.27 638.07,246.04 639.89,252.83 641.72,259.64 643.55,266.45 645.37,273.26 647.20,280.05 649.03,286.83 650.85,293.59 652.68,300.31 654.51,307.00 656.33,313.64 658.16,320.22 659.99,326.74 661.81,333.20 663.64,339.57 665.47,345.87 667.29,352.07 669.12,358.17 670.95,364.18 672.77,370.07 674.60,375.84" fill="none" stroke="#1f77b4" stroke-width="2.3" stroke-linejoin="round"/>
</svg><div style="position:absolute;left:1051px;top:887px;width:869px;height:2px;background:#1f2130;"></div><div style="position:absolute;left:1057px;top:904px;width:5px;height:62px;background:#1f2232;border-radius:2.5px"></div><svg style="position:absolute;left:1084px;top:922px;" width="24" height="26" viewBox="0 0 24 26" fill="none"><path d="M3.5 3 L20 13 L3.5 23 Z" stroke="#d9dae4" stroke-width="2.2"/></svg><div style="position:absolute;left:1128.5px;top:903.5px;width:773px;height:64px;background:#1b1e2b;box-shadow:inset 0 0 0 1px #171922"></div><div style="position:absolute;left:1163.00px;top:925.52px;font-family:'Liberation Mono', monospace;font-size:23px;line-height:1;white-space:pre;color:#5d6280;font-weight:400;font-style:normal;">Type 'python' code here and press Shift+Enter to run</div><div style="position:absolute;left:0px;top:979px;width:61px;height:40px;background:#80cbc4;"></div><svg style="position:absolute;left:20px;top:986px;" width="22" height="24" viewBox="0 0 22 24" fill="none"><path d="M2.5 11 L9 17.5 L2.5 22 M19.5 2 L13 8.5 L19.5 13" stroke="#1b1e2b" stroke-width="1.7"/></svg><svg style="position:absolute;left:75px;top:986px;" width="25" height="25" viewBox="0 0 25 25" fill="none"><circle cx="12.3" cy="12.3" r="10.3" stroke="#7880ac" stroke-width="1.6"/><path d="M8.3 8.3 L16.3 16.3 M16.3 8.3 L8.3 16.3" stroke="#7880ac" stroke-width="1.6"/></svg><div style="position:absolute;left:106.05px;top:988.76px;font-family:'Liberation Sans', sans-serif;font-size:22.4px;line-height:1;white-space:pre;color:#7880ac;font-weight:400;font-style:normal;transform:scaleX(0.9545);transform-origin:0 0;">0</div><svg style="position:absolute;left:125px;top:987px;" width="24" height="24" viewBox="0 0 24 24" fill="none"><path d="M12 2.5 L22.2 21.5 H1.8 Z" stroke="#7880ac" stroke-width="1.6" stroke-linejoin="round"/><path d="M12 9 V15" stroke="#7880ac" stroke-width="1.8"/><circle cx="12" cy="18.3" r="1.2" fill="#7880ac"/></svg><div style="position:absolute;left:155.03px;top:988.76px;font-family:'Liberation Sans', sans-serif;font-size:22.4px;line-height:1;white-space:pre;color:#7880ac;font-weight:400;font-style:normal;transform:scaleX(0.9727);transform-origin:0 0;">0</div><svg style="position:absolute;left:195px;top:986px;" width="28" height="26" viewBox="0 0 28 26" fill="none"><path d="M5 18 C2 14 3.5 8 9 7 H19 V2.5 L25.5 9 L19 15.5 V11 H10 C7.5 11 6 13 6.5 15.5" stroke="#7880ac" stroke-width="1.6" stroke-linejoin="round"/><circle cx="9.5" cy="21" r="3.3" stroke="#7880ac" stroke-width="1.6"/></svg><div style="position:absolute;left:226.80px;top:988.76px;font-family:'Liberation Sans', sans-serif;font-size:22.4px;line-height:1;white-space:pre;color:#7880ac;font-weight:400;font-style:normal;transform:scaleX(0.9038);transform-origin:0 0;">Live Share</div><div style="position:absolute;left:863.09px;top:988.76px;font-family:'Liberation Sans', sans-serif;font-size:22.4px;line-height:1;white-space:pre;color:#7880ac;font-weight:400;font-style:normal;transform:scaleX(0.9112);transform-origin:0 0;">Ln 4, Col 1</div><div style="position:absolute;left:990.10px;top:988.76px;font-family:'Liberation Sans', sans-serif;font-size:22.4px;line-height:1;white-space:pre;color:#7880ac;font-weight:400;font-style:normal;transform:scaleX(0.8980);transform-origin:0 0;">Spaces: 4</div><div style="position:absolute;left:1107.59px;top:988.76px;font-family:'Liberation Sans', sans-serif;font-size:22.4px;line-height:1;white-space:pre;color:#7880ac;font-weight:400;font-style:normal;transform:scaleX(0.9113);transform-origin:0 0;">UTF-8</div><div style="position:absolute;left:1193.18px;top:988.76px;font-family:'Liberation Sans', sans-serif;font-size:22.4px;line-height:1;white-space:pre;color:#7880ac;font-weight:400;font-style:normal;transform:scaleX(0.8246);transform-origin:0 0;">CRLF</div><svg style="position:absolute;left:1266px;top:987px;" width="26" height="26" viewBox="0 0 26 26" fill="none"><path d="M7 2.5 C4 2.5 4.5 5 4.5 8 C4.5 10.5 3.5 11.5 2 11.5 C3.5 11.5 4.5 12.5 4.5 15 C4.5 18 4 20.5 7 20.5" stroke="#7880ac" stroke-width="1.8"/><path d="M15 2.5 C17 2.5 17.5 4 17.5 6" stroke="#7880ac" stroke-width="1.8"/><circle cx="18" cy="18" r="5" fill="#7880ac"/><path d="M16 16 L20 20 M20 16 L16 20" stroke="#1b1e2b" stroke-width="1.4"/></svg><div style="position:absolute;left:1301.52px;top:988.76px;font-family:'Liberation Sans', sans-serif;font-size:22.4px;line-height:1;white-space:pre;color:#7880ac;font-weight:400;font-style:normal;transform:scaleX(0.9779);transform-origin:0 0;">Python</div><div style="position:absolute;left:1394.06px;top:988.76px;font-family:'Liberation Sans', sans-serif;font-size:22.4px;line-height:1;white-space:pre;color:#7880ac;font-weight:400;font-style:normal;transform:scaleX(0.9401);transform-origin:0 0;">3.11.4 ('pyFin': conda)</div><svg style="position:absolute;left:1629px;top:986px;" width="24" height="26" viewBox="0 0 24 26" fill="none"><path d="M6 17.5 A8.6 8.6 0 1 1 17.8 17.5" stroke="#7880ac" stroke-width="1.7"/><path d="M8.6 14.3 A4.6 4.6 0 1 1 15.2 14.3" stroke="#7880ac" stroke-width="1.7"/><circle cx="11.9" cy="11" r="2.2" fill="#7880ac"/><path d="M11.9 12 V24" stroke="#7880ac" stroke-width="2.4"/></svg><div style="position:absolute;left:1658.08px;top:988.76px;font-family:'Liberation Sans', sans-serif;font-size:22.4px;line-height:1;white-space:pre;color:#7880ac;font-weight:400;font-style:normal;transform:scaleX(0.9211);transform-origin:0 0;">Go Live</div><svg style="position:absolute;left:1756px;top:986px;" width="30" height="26" viewBox="0 0 30 26" fill="none"><circle cx="10" cy="8" r="5" stroke="#7880ac" stroke-width="2.2"/><circle cx="20" cy="8" r="5" stroke="#7880ac" stroke-width="2.2"/>
<path d="M4 15 Q4 11.5 7.5 12 H22.5 Q26 11.5 26 15 V18 Q26 24.5 15 24.5 Q4 24.5 4 18 Z" fill="#7880ac"/><path d="M2.5 15 V19 M27.5 15 V19" stroke="#7880ac" stroke-width="2"/><rect x="11" y="15.5" width="2" height="4" fill="#1b1e2b"/><rect x="17" y="15.5" width="2" height="4" fill="#1b1e2b"/></svg><svg style="position:absolute;left:1810px;top:985px;" width="30" height="28" viewBox="0 0 30 28" fill="none"><circle cx="9" cy="10" r="5" stroke="#7880ac" stroke-width="1.6"/><path d="M2 25 C2 19 5 16.5 9 16.5 C13 16.5 16 19 16 25" stroke="#7880ac" stroke-width="1.6"/>
<path d="M14 3 H27 V13 H22 L18.5 16 V13 H17" stroke="#7880ac" stroke-width="1.6" stroke-linejoin="round"/><path d="M19 8 L21 10 L24.5 6" stroke="#7880ac" stroke-width="1.8"/></svg><svg style="position:absolute;left:1864px;top:986px;" width="28" height="26" viewBox="0 0 28 26" fill="none"><path d="M6 18 V11 C6 6.5 9 3.5 13.5 3.5 C18 3.5 21 6.5 21 11 V18 L23.5 20.5 H3.5 Z" stroke="#7880ac" stroke-width="1.6" stroke-linejoin="round"/><path d="M11 21.5 A2.5 2.5 0 0 0 16 21.5" stroke="#7880ac" stroke-width="1.6"/></svg>
</body></html>
